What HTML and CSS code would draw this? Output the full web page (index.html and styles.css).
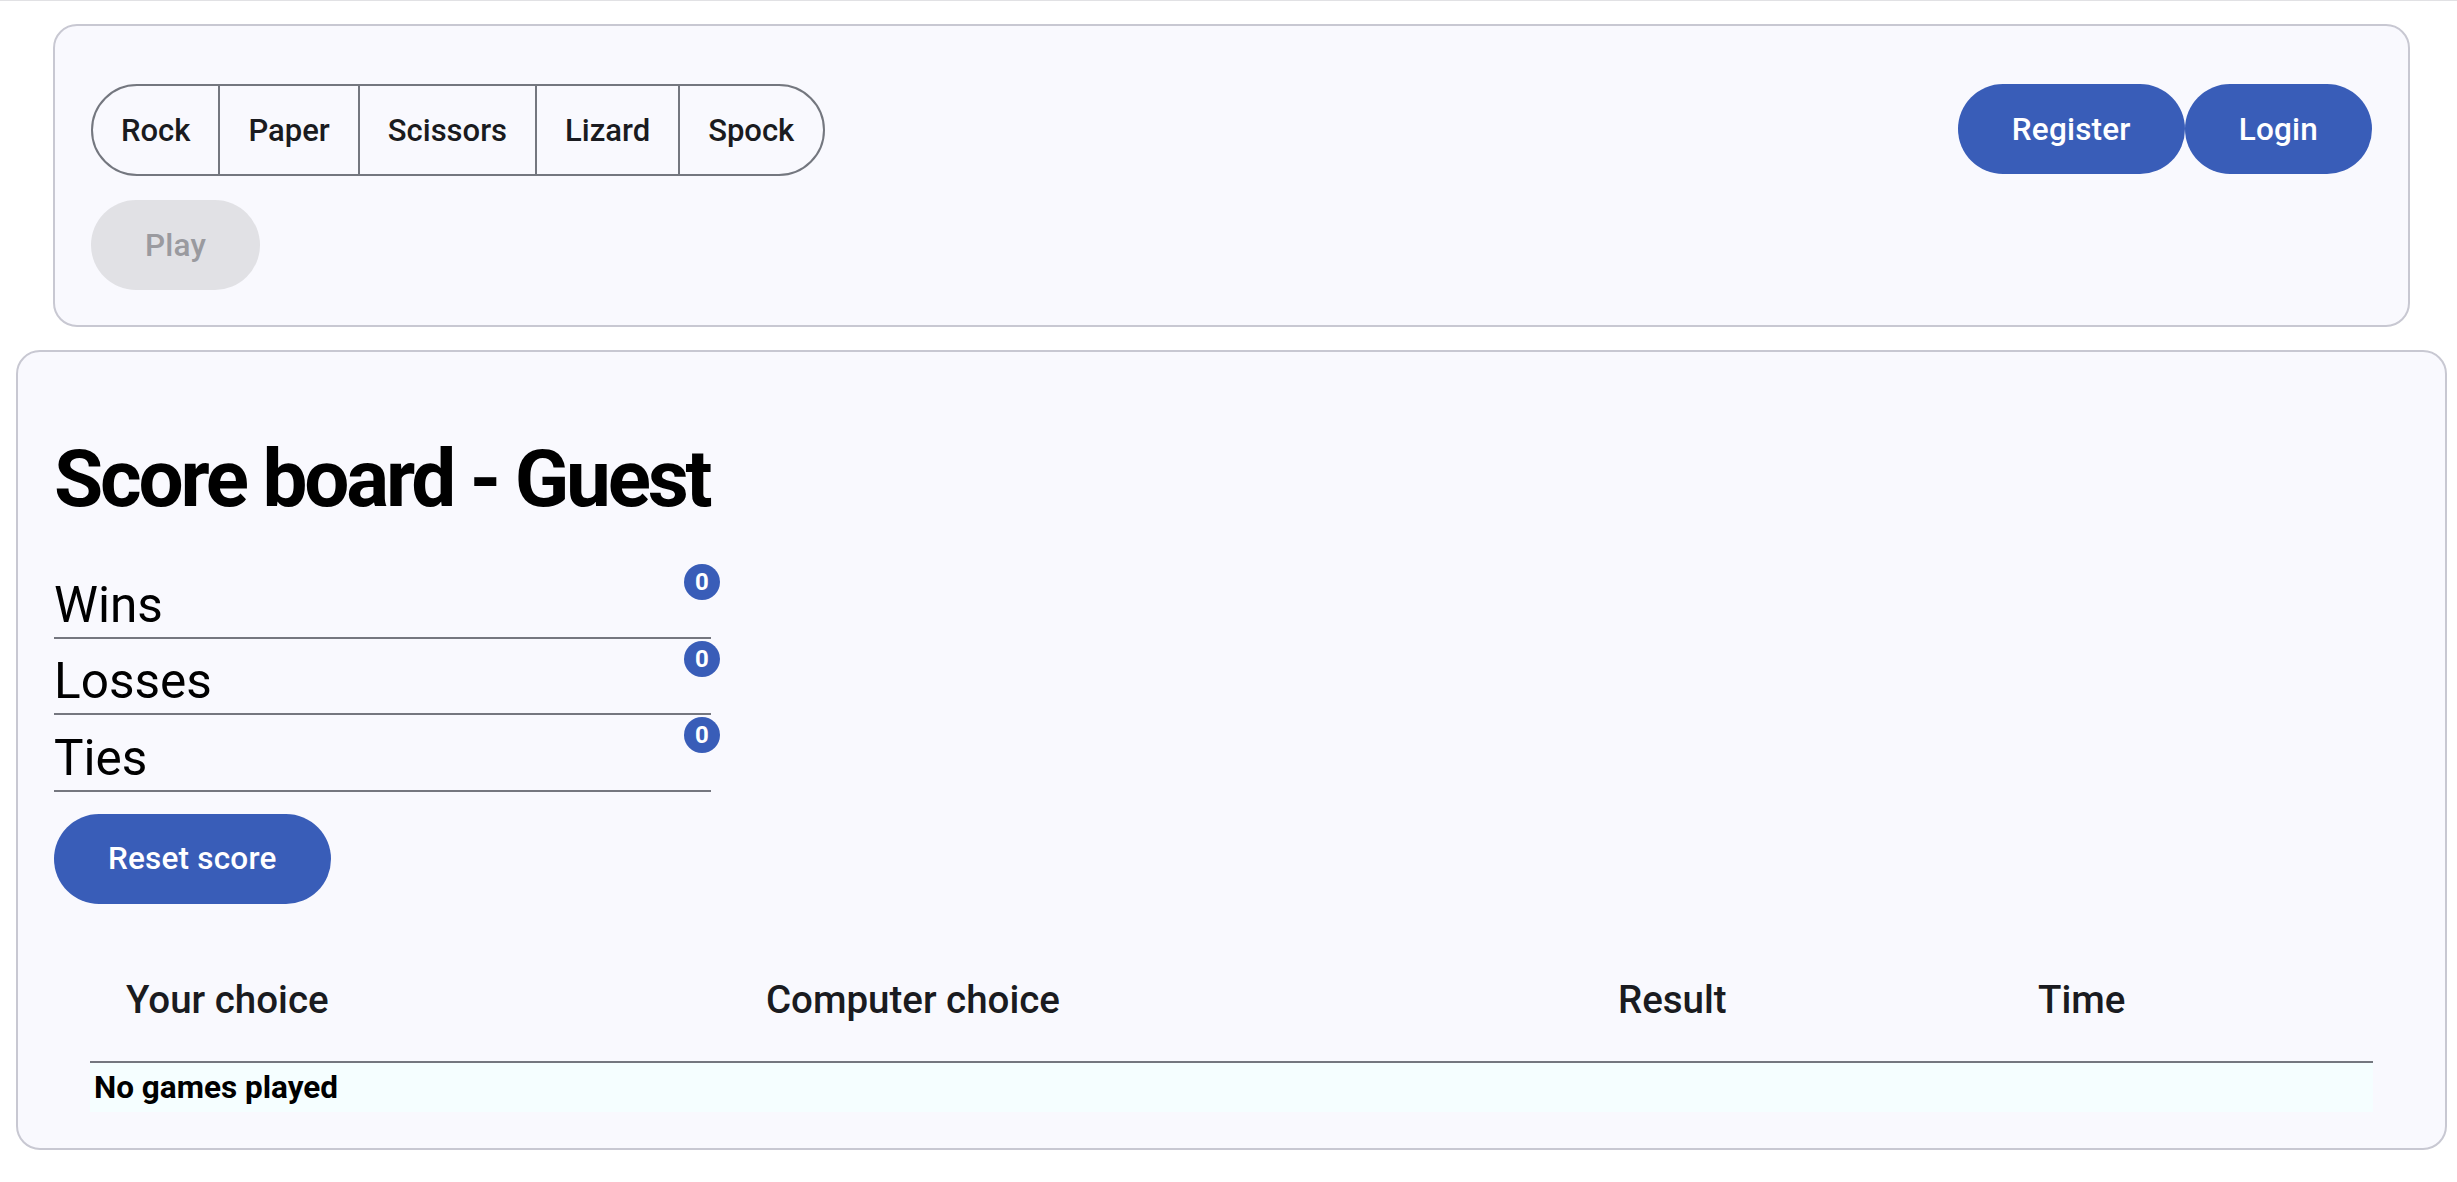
FILE: index.html
```html
<!DOCTYPE html>
<html lang="en">
<head>
<meta charset="utf-8">
<title>Rock Paper Scissors Lizard Spock</title>
<link rel="stylesheet" href="styles.css">
</head>
<body>
<div class="topline"></div>
<main class="page">
  <section class="card nav-card">
    <div class="nav-row">
      <div class="segmented">
        <button class="seg">Rock</button>
        <button class="seg">Paper</button>
        <button class="seg">Scissors</button>
        <button class="seg">Lizard</button>
        <button class="seg">Spock</button>
      </div>
      <div class="auth">
        <button class="btn btn-primary">Register</button>
        <button class="btn btn-primary">Login</button>
      </div>
    </div>
    <button class="btn btn-disabled" disabled>Play</button>
  </section>

  <section class="card score-card">
    <h1 class="title">Score board - Guest</h1>
    <ul class="score-list">
      <li class="score-row"><span>Wins</span><span class="badge">0</span></li>
      <li class="score-row"><span>Losses</span><span class="badge">0</span></li>
      <li class="score-row"><span>Ties</span><span class="badge">0</span></li>
    </ul>
    <button class="btn btn-primary reset">Reset score</button>

    <table class="history">
      <colgroup>
        <col class="c1"><col class="c2"><col class="c3"><col class="c4">
      </colgroup>
      <thead>
        <tr><th>Your choice</th><th>Computer choice</th><th>Result</th><th>Time</th></tr>
      </thead>
      <tbody>
        <tr><td colspan="4" class="empty">No games played</td></tr>
      </tbody>
    </table>
  </section>
</main>
</body>
</html>
```

FILE: styles.css
```css
* { box-sizing: border-box; }

html, body {
  margin: 0;
  padding: 0;
  background: #ffffff;
  font-family: Roboto, "Liberation Sans", Arial, sans-serif;
  color: #1a1b20;
}

.topline {
  height: 1px;
  background: #e1e1e4;
}

.page {
  padding: 23px 10px 30px 16px;
}

.card {
  background: #f9f9fe;
  border: 2px solid #c8c8d2;
  border-radius: 24px;
}

.nav-card {
  margin: 0 37px;
  padding: 58px 36px 35px;
}

.nav-row {
  display: flex;
  justify-content: space-between;
  align-items: flex-start;
  margin-bottom: 24px;
}

.segmented {
  display: flex;
  height: 92px;
  border: 2px solid #74777f;
  border-radius: 46px;
  overflow: hidden;
}

.seg {
  font-family: inherit;
  font-size: 31px;
  font-weight: 500;
  letter-spacing: 0;
  color: #1a1b20;
  background: transparent;
  border: none;
  border-left: 2px solid #74777f;
  padding: 0 28px;
  height: 100%;
}
.seg:first-child { border-left: none; padding-left: 28px; }
.seg:last-child { padding-right: 29px; }

.auth {
  display: flex;
}

.btn {
  font-family: inherit;
  font-size: 31.5px;
  font-weight: 500;
  letter-spacing: 0.2px;
  height: 90px;
  padding: 0 54px;
  border: none;
  border-radius: 45px;
  display: inline-flex;
  align-items: center;
  justify-content: center;
}

.btn-primary {
  background: #395db8;
  color: #ffffff;
}

.btn-disabled {
  background: #e1e1e5;
  color: #9a9a9f;
}

.score-card {
  margin-top: 23px;
  padding: 36px 36px 36px;
}

.title {
  font-size: 80px;
  line-height: 96px;
  font-weight: 700;
  color: #000;
  margin: 43px 0 35px;
  letter-spacing: -3.2px;
}

.score-list {
  list-style: none;
  margin: 0;
  padding: 0;
  width: 657px;
}

.score-row {
  position: relative;
  padding-top: 11.5px;
  font-size: 49.5px;
  line-height: 63px;
  color: #000;
  border-bottom: 2px solid #75777f;
}

.badge {
  position: absolute;
  top: 2px;
  right: -9px;
  width: 36px;
  height: 36px;
  border-radius: 50%;
  background: #395db8;
  color: #fff;
  font-size: 24px;
  font-weight: 700;
  line-height: 36px;
  text-align: center;
}

.reset {
  margin-top: 22px;
}

.history {
  width: calc(100% - 72px);
  margin: 34px 36px 0;
  border-collapse: collapse;
  table-layout: fixed;
}

.c1 { width: 28.03%; }
.c2 { width: 37.32%; }
.c3 { width: 18.4%; }
.c4 { width: 16.25%; }

.history th {
  height: 124px;
  text-align: left;
  padding: 0 36px;
  font-size: 38.5px;
  font-weight: 500;
  color: #1a1b20;
  border-bottom: 2px solid #74777f;
}

.history td.empty {
  height: 50px;
  padding: 0 4px;
  background: #f5feff;
  font-size: 31.5px;
  font-weight: 700;
  color: #000;
}
```
